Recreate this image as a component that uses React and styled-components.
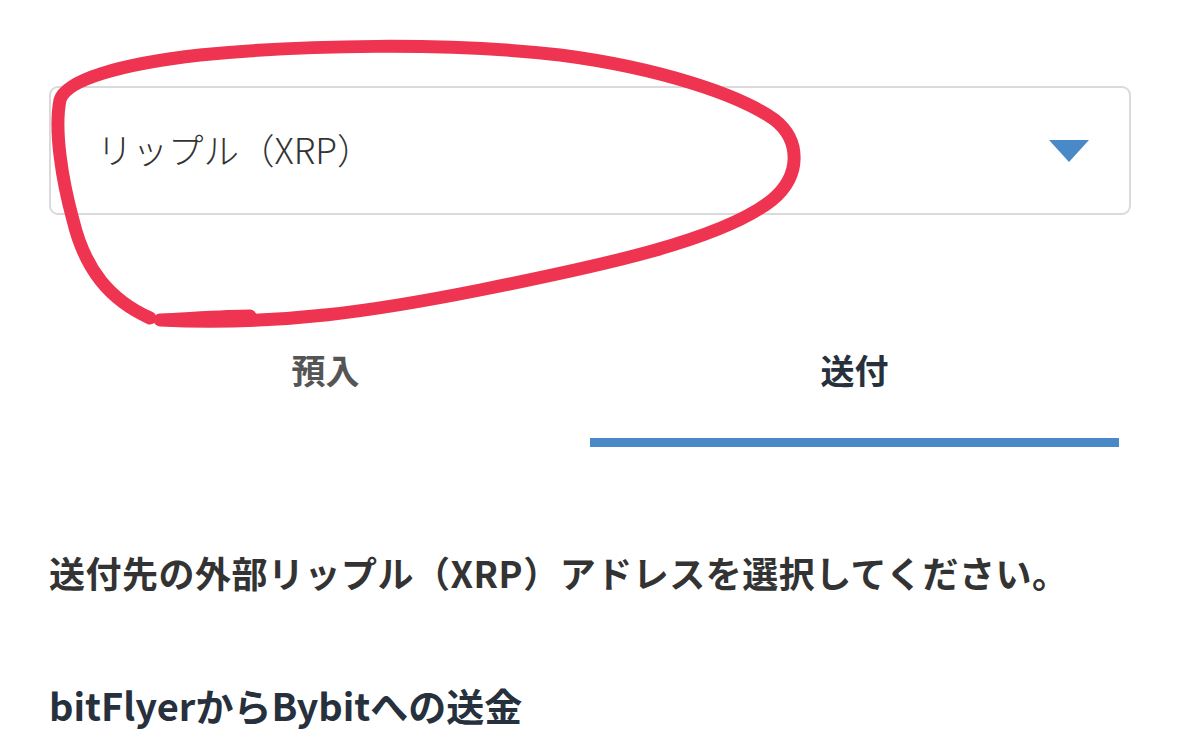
import React from "react";
import styled, { createGlobalStyle } from "styled-components";

const Global = createGlobalStyle`
  html, body { margin: 0; padding: 0; background: #ffffff; }
  body { font-family: "Noto Sans CJK JP", "Noto Sans", sans-serif; }
`;

const Page = styled.div`
  position: relative;
  width: 1179px;
  height: 742px;
  overflow: hidden;
  box-sizing: border-box;
  padding: 86px 48px 0 49px;
`;

const SelectBox = styled.div`
  box-sizing: border-box;
  height: 129px;
  border: 2px solid #dadada;
  border-radius: 9px;
  display: flex;
  align-items: center;
  justify-content: space-between;
  padding: 0 40px 0 46px;
`;

const SelectText = styled.span`
  font-size: 35.5px;
  font-weight: 300;
  color: #333333;
  line-height: 1;
  margin-top: -4px;
`;

const Tabs = styled.div`
  display: grid;
  grid-template-columns: 1fr 1fr;
  margin: 0 12px 0 12px;
`;

const Tab = styled.div`
  box-sizing: border-box;
  height: 232px;
  padding-top: 131px;
  text-align: center;
  font-size: 34px;
  font-weight: 700;
  line-height: 48px;
  color: ${(p) => (p.$active ? "#27303d" : "#555555")};
  border-bottom: 9px solid ${(p) => (p.$active ? "#4a89c7" : "transparent")};
`;

const Description = styled.p`
  margin: 101px 0 0 0;
  font-size: 36px;
  font-weight: 700;
  line-height: 48px;
  color: #333333;
  letter-spacing: 0.5px;
`;

const Heading = styled.h2`
  margin: 85px 0 0 0;
  font-size: 38px;
  font-weight: 700;
  line-height: 48px;
  color: #27303d;
`;

const Annotation = styled.svg`
  position: absolute;
  left: 0;
  top: 0;
  pointer-events: none;
`;

export default function App() {
  return (
    <>
      <Global />
      <Page>
        <SelectBox>
          <SelectText>リップル（XRP）</SelectText>
          <svg width="40" height="22" viewBox="0 0 40 22">
            <path d="M0 0 L40 0 L20 22 Z" fill="#4a89c7" />
          </svg>
        </SelectBox>
        <Tabs>
          <Tab>預入</Tab>
          <Tab $active>送付</Tab>
        </Tabs>
        <Description>送付先の外部リップル（XRP）アドレスを選択してください。</Description>
        <Heading>bitFlyerからBybitへの送金</Heading>
        <Annotation width="1179" height="742" viewBox="0 0 1179 742">
          <path
            d="M 150 318 C 110 300, 85 270, 73 220 C 62 180, 54 130, 60 100 C 66 80, 120 64, 200 55 C 300 45, 450 42, 560 55 C 660 68, 740 95, 775 120 C 800 140, 802 175, 772 200 C 722 240, 600 266, 480 290 C 380 310, 280 326, 160 320 C 200 318, 230 316, 250 316"
            fill="none"
            stroke="#ee3450"
            strokeWidth="13"
            strokeLinecap="round"
            strokeLinejoin="round"
          />
        </Annotation>
      </Page>
    </>
  );
}
